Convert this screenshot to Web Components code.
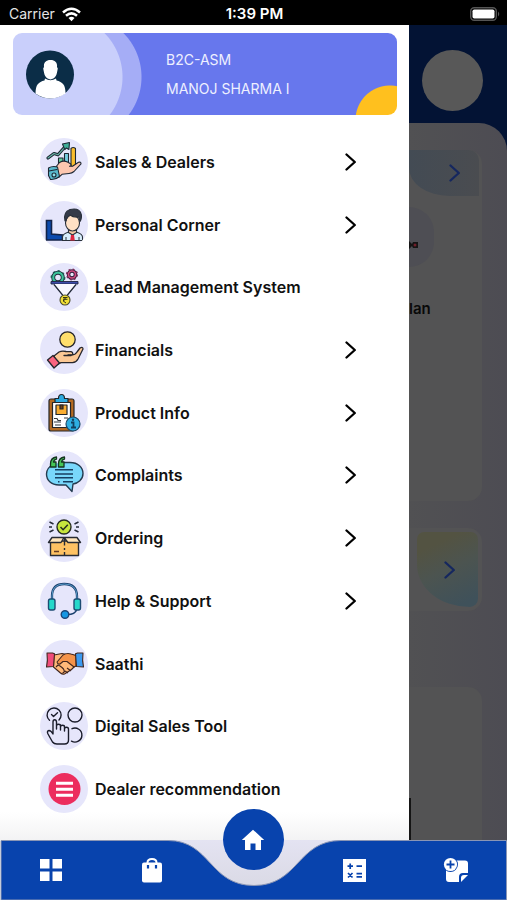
<!DOCTYPE html>
<html lang="en">
<head>
<meta charset="utf-8">
<meta name="viewport" content="width=device-width, initial-scale=1">
<title>Menu</title>
<style>
html, body { margin: 0; }
body { font-family: Inter, "Liberation Sans", sans-serif; background: #fff; color: #111; }
</style>
</head>
<body>
<app-screen>
  <status-bar slot="status"></status-bar>
  <side-drawer slot="drawer">
    <profile-card slot="profile"><span slot="role">B2C-ASM</span><span slot="name">MANOJ SHARMA I</span></profile-card>
    <menu-item icon="sales" more>Sales &amp; Dealers</menu-item>
    <menu-item icon="personal" more>Personal Corner</menu-item>
    <menu-item icon="lead">Lead Management System</menu-item>
    <menu-item icon="finance" more>Financials</menu-item>
    <menu-item icon="product" more>Product Info</menu-item>
    <menu-item icon="complaint" more>Complaints</menu-item>
    <menu-item icon="order" more>Ordering</menu-item>
    <menu-item icon="support" more>Help &amp; Support</menu-item>
    <menu-item icon="saathi">Saathi</menu-item>
    <menu-item icon="digital">Digital Sales Tool</menu-item>
    <menu-item icon="dealer">Dealer recommendation</menu-item>
  </side-drawer>
  <dash-peek slot="page"></dash-peek>
  <tab-bar slot="tabs"></tab-bar>
</app-screen>
<script>
const chevron = `<svg class="chev" width="12" height="18" viewBox="0 0 12 18" fill="none" stroke="currentColor" stroke-width="2.3" stroke-linecap="round" stroke-linejoin="round" aria-hidden="true"><path d="M1.500 1.500L9.800 9 1.500 16.500"/></svg>`;

const icons = {
sales: `<g stroke="#1d2733" stroke-width="1.1" stroke-linejoin="round" stroke-linecap="round">
 <path d="M8 20l6-4.500 4 1.300 7-8" fill="none" stroke-width="3.200"/><path d="M8 20l6-4.500 4 1.300 7-8" fill="none" stroke="#69b4a6" stroke-width="1.100"/>
 <path d="M22.500 6l7-1.500-.6 7-2.500-1.500-1.600 1.600z" fill="#3fae96"/>
 <path d="M18.500 20h4.500v8h-4.500z" fill="#62ce9c"/><path d="M24.500 15.500h4v12h-4z" fill="#76cde0"/><path d="M31 10.500q2.200-2 4.500 0v18H31z" fill="#f9bd2c"/>
 <path d="M15 30l4.500-5.500q4-2.500 8-.5l3 1.800q1.500 2-1 2.500h3l6-4q2.500-.8 2.500 1.500l-7 7.700q-2 1.700-5 2l-7 .8-3.500 3.200z" fill="#fdc7b0"/>
 <path d="M8.500 30q4-2.500 9-1l2 9.500q-4 3.500-9 3l-2-4z" fill="#58b8cc"/><circle cx="14" cy="37" r="2" fill="#8fe0ea"/><path d="M9 33l8-1.500" fill="none"/></g>`,
personal: `<path d="M6.500 19.500h5V33l11 1v5h-16z" fill="#0c4aad" stroke="#132348" stroke-width="1.600"/>
 <g stroke="#29303a" stroke-width="1.100" stroke-linejoin="round">
 <path d="M22.500 39.500V36q0-3 6-5l4-1.500 4 1.500q6 2 6 5v3.500z" fill="#d7edfb"/>
 <path d="M28.500 27h8v4.500l-4 2.500-4-2.500z" fill="#f4c8a4"/><ellipse cx="32.500" cy="22" rx="7" ry="8" fill="#ffe1c5"/>
 <path d="M25 20q-2-9 5-11.500 9-2 11 4 1.500 4-1 8l-1-4.500q-6 .5-9-2-3 1-4 6z" fill="#343a48"/></g>
 <path d="M31 34h3l.8 5.500h-4.600z" fill="#df2740"/><path d="M26 36v3M39 36v3" stroke="#29303a"/>`,
lead: `<g fill="none"><circle cx="18" cy="14.500" r="4.800" stroke="#1f2b3a" stroke-width="4"/><circle cx="18" cy="14.500" r="4.800" stroke="#3cc49a" stroke-width="2.200"/>
 <circle cx="18" cy="14.500" r="6.600" stroke="#1f5a54" stroke-width="1.600" stroke-dasharray="2.200 2.900"/>
 <circle cx="32" cy="11.500" r="3.500" stroke="#30203c" stroke-width="3.500"/><circle cx="32" cy="11.500" r="3.500" stroke="#d24a80" stroke-width="1.700"/>
 <circle cx="32" cy="11.500" r="5.300" stroke="#7c2c58" stroke-width="1.500" stroke-dasharray="2 2.160"/></g>
 <path d="M11 18.500h27v2.500H11z" fill="#3d4cab" stroke="#1f2440" stroke-width=".9"/>
 <path d="M14 21l9 11h4l9-11z" fill="#f8f8ff"/><path d="M14 21.500l9 11v3M36 21.500l-9 11v3" fill="none" stroke="#232a3a" stroke-width="1.300"/>
 <circle cx="25" cy="37" r="5" fill="#f2df35" stroke="#4a4a2b" stroke-width="1.100"/><path d="M23 34.500h4.500M23 36.300h4.500M23 34.500q5 1 0 3.300l3 2.200" fill="none" stroke="#363617"/>`,
finance: `<g stroke="#26262c" stroke-width="1.300" stroke-linejoin="round" stroke-linecap="round">
 <circle cx="27.500" cy="13.500" r="7.700" fill="#ffdf6c"/>
 <path d="M14 30l5-4q3-1.500 7-.5l5 .2q3 1.200 1 3.300h-4 4q3 0 5-3l3-4q3-1.500 3 1l-5 10q-2 3.500-5.500 3.700H21l-4 2z" fill="#fbc895"/>
 <path d="M24 29.500h7" fill="none"/><path d="M7.500 34l5.500-4.500 6.500 7.500-5.500 5z" fill="#fb6480"/></g>`,
product: `<g stroke="#222529" stroke-width="1.200" stroke-linejoin="round">
 <rect x="9" y="10" width="25" height="32" rx="2" fill="#b46a21"/><path d="M12.500 13.500h18v25h-18z" fill="#fff"/>
 <path d="M15 13.500v-4h3.500q0-4 3-4t3 4H28v4z" fill="#2ba9e0"/><path d="M16 16h11v9.500H16z" fill="#f9ad32"/>
 <path d="M20 16h3v4h-3z" fill="#714116"/></g><path d="M14 29.500h3l1 2h3M24 29h4M14 33h7M15 36h6" fill="none" stroke="#37393d" stroke-width="1.100"/>
 <circle cx="33" cy="35" r="7" fill="#2dafe3" stroke="#1d4966" stroke-width="1.200"/><path d="M31 33.500h2.500V38M31 38.500h5" fill="none" stroke="#123f5f" stroke-width="1.800"/><circle cx="33" cy="30.800" r="1.200" fill="#123f5f"/>`,
complaint: `<path d="M20 11.500h10c8 0 13 5 13 11s-5 10-10 10.500l-1 7.500-6-6.500h-7C11 34 6.500 29 6.500 23q0-6 6.500-9.500" fill="#78d7fb" stroke="#243b50" stroke-width="1.400" stroke-linejoin="round"/>
 <path d="M15 18.800h18M15 23h18M15 26.800h18M23 30.800h10M18 30.800h1.500" stroke="#173f62" stroke-width="1.500"/>
 <path d="M16.500 6q-6 .7-6 7v3h5.500v-5H13.500q.5-2.500 3-3zM24.500 6q-6 .7-6 7v3H24v-5h-2.500q.5-2.500 3-3z" fill="#44c557" stroke="#163421" stroke-width="1.300" stroke-linejoin="round"/>`,
order: `<circle cx="24" cy="13" r="7" fill="#c7e63d" stroke="#272d22" stroke-width="1.400"/><path d="M20.500 13l2.600 2.700 4.700-5" fill="none" stroke="#272d22" stroke-width="1.500"/>
 <path d="M9.500 8l4 2M9 13h3M9.500 18l4-2M38.500 8l-4 2M39 13h-3M38.500 18l-4-2" stroke="#252b38" stroke-width="1.500"/>
 <g stroke="#282c34" stroke-width="1.400" stroke-linejoin="round"><path d="M10.500 27h28v14.500h-28z" fill="#fec263"/>
 <path d="M12 23.500h12l-3 5H8.500zM24 23.500h13l3.500 5H28z" fill="#ffe6bb"/><path d="M24.500 23.500v8M24.500 34v2M24.500 38v3.500"/></g><path d="M14 37.500h5" stroke="#663c23" stroke-width="1.600"/>`,
support: `<path d="M12 23v-4q0-12 12.300-12T37 19v4" fill="none" stroke="#1c4270" stroke-width="2.300"/><path d="M12 23v-4q0-12 12.300-12T37 19v4" fill="none" stroke="#73bee9" stroke-width=".7"/>
 <path d="M36.500 33q-1.500 4.500-9 4.500" fill="none" stroke="#1c4270" stroke-width="1.600"/><g fill="#25d8ca" stroke="#1d4c73" stroke-width="1.400"><rect x="8.500" y="22" width="6.500" height="11" rx="2"/><rect x="34" y="22" width="6.500" height="11" rx="2"/></g>
 <circle cx="25" cy="37.500" r="3.800" fill="#1597e4" stroke="#1b4678" stroke-width="1.400"/>`,
saathi: `<g stroke="#40261f" stroke-width="1.100" stroke-linejoin="round"><path d="M14 15l8-1.500 5 1 8.500 1v10l-4 4-7 4.500q-2 .8-4-1l-7-6z" fill="#ffb979"/>
 <path d="M17 22l6-7q4-2.500 8-1l5 1.500v10.500l-2 1-7-5.500h-4l-3 2.500q-2.500.500-3-2z" fill="#f4934a"/>
 <path d="M16 27l2-2 2 1 2 1.500 1.500 1.500 1 2.500-2 2M27 28l4 3M25 31l3 2" fill="none"/>
 <path d="M7 13h5.500l2 .8-1 12.700-7 .5q1.500-6 .5-14z" fill="#f04c7b"/><path d="M43 13h-5.500l-2 .8 1 12.700 7 .5q-1.500-6-.5-14z" fill="#3b9af0"/></g>`,
digital: `<g fill="none" stroke="#1b1d2b" stroke-width="1.400" stroke-linejoin="round" stroke-linecap="round"><path d="M9.500 18.300A7 7 0 1 1 19 18"/><path d="M11.500 12.500l2 2 4-3.800"/><circle cx="35" cy="13" r="7"/><path d="M32 26.700a7 7 0 1 1-.5 12.500"/>
 <path d="M13 32V20q0-2.300 1.700-2.300T16.500 20v7-3q0-1.700 2-1.700t2 1.700v4-3q0-1.700 2-1.700t2 1.700v4-2q0-1.700 2-1.700t2 2V38q0 4-4 4H17q-3 0-4.500-2L8 32q-1.500-3 1-3.500 2 0 4 3.500"/></g>`,
dealer: `<circle cx="24.500" cy="24" r="16" fill="#ec2d5e"/><path d="M16 18.200h17M16 24.200h17M16 30.200h17" stroke="#fff" stroke-width="3"/>`
};

function define(name, render) {
  customElements.define(name, class extends HTMLElement {
    connectedCallback() {
      if (this.shadowRoot) return;
      this.attachShadow({ mode: "open" }).innerHTML = render(this);
    }
  });
}

define("app-screen", () => `<style>
:host { display: grid; grid-template: auto 1fr / minmax(0, 1fr) 98px; min-height: 100vh; position: relative; }
slot[name=status] { grid-column: 1 / -1; display: block; grid-row: 1; }
slot[name=drawer], slot[name=page] { display: grid; min-width: 0; }
slot[name=tabs] { display: block; position: absolute; inset: auto 0 0; }
</style><slot name="status"></slot><slot name="drawer"></slot><slot name="page"></slot><slot name="tabs"></slot>`);

define("status-bar", () => `<style>
:host { display: grid; grid-template-columns: 1fr auto 1fr; align-items: center; height: 25px; box-sizing: border-box; padding: 3px 7px 0 9px; background: #000; color: #fff; line-height: 20px; }
.l { display: flex; gap: 7px; align-items: center; color: #e4e4e4; font-size: 14px; }
b { font-weight: 600; font-size: 15px; }
.r { justify-self: end; }
svg { display: block; }
</style><span class="l">Carrier<svg width="19" height="15" viewBox="0 0 19 15" fill="none" stroke="#fff" stroke-width="2.500"><path d="M1 5.500q8.500-7.500 17 0M4 8.800q5.500-4.800 11 0"/><path d="M6.500 11q3-2.500 6 0l-3 3.200z" fill="#fff" stroke="none"/></svg></span>
<b>1:39 PM</b>
<svg class="r" width="30" height="14" viewBox="0 0 30 14"><rect x=".7" y=".7" width="25.600" height="12.600" rx="3.500" fill="none" stroke="#555" stroke-width="1.400"/><rect x="2.500" y="2.500" width="22" height="9" rx="1.800" fill="#fff"/><path d="M28 4.500q2.500 2.500 0 5z" fill="#555"/></svg>`);

define("side-drawer", () => `<style>
:host { display: flex; flex-direction: column; background: #fff; padding: 8px 12px 87px 13px; position: relative; }
:host::after { content: ""; position: absolute; inset: auto 0 60px; height: 28px; background: linear-gradient(#fff0, #e9e9ea88); pointer-events: none; }
nav { flex: 1; display: flex; flex-direction: column; justify-content: space-between; padding: 23px 40px 0 27px; }
</style><slot name="profile"></slot><nav aria-label="Main menu"><slot></slot></nav>`);

define("profile-card", () => `<style>
:host { display: flex; align-items: center; gap: 91px; height: 82px; padding: 0 13px; box-sizing: border-box; border-radius: 9px; color: #eef0ff; font-size: 14px; line-height: 20px;
 background: radial-gradient(circle at calc(100% - 7px) 87px, #ffc01e 34px, #0000 35px), radial-gradient(circle at 47px 44px, #c9cffb 62px, #0000 63px), radial-gradient(circle at 66px 44px, #a5adf6 62px, #6777ed 63px); }
.t { display: flex; flex-direction: column; gap: 9px; }
</style><svg width="49" height="49" viewBox="0 0 49 49" role="img" aria-label="Profile picture"><circle cx="24" cy="24.500" r="24" fill="#0b2d47"/><path d="M24.500 10c-5 0-7 3-6.500 7l-.8 1.500.8 4c.5 3 2 6 6.500 7 4.500-1 6-4 6.500-7l.8-4-.8-1.500c.5-4-1.500-7-6.500-7zM19 28.500l-.5 2c-6 1.500-9 4-9 13q15 10 30 0c0-9-3-11.500-9-13l-.5-2q-5.500 3.500-11 0z" fill="#fff"/></svg>
<div class="t"><slot name="role"></slot><slot name="name"></slot></div>`);

define("menu-item", el => `<style>
:host { display: block; }
button { all: unset; box-sizing: border-box; display: flex; align-items: center; gap: 7px; width: 100%; cursor: pointer; font-size: 16px; line-height: 20px; font-weight: 600; color: #111; }
button:focus-visible { outline: 2px solid #0843ad; }
.i { display: block; background: #e6e6fb; border-radius: 50%; flex: none; }
.t { flex: 1; } .chev { color: #000; }
</style><button type="button"><svg class="i" width="48" height="48" viewBox="0 0 48 48" aria-hidden="true">${icons[el.getAttribute("icon")]}</svg><span class="t"><slot></slot></span>${el.hasAttribute("more") ? chevron : ""}</button>`);

define("dash-peek", () => `<style>
:host { display: flex; flex-direction: column; background: #031334; overflow: hidden; color: #15275f; }
.av { width: 61px; height: 61px; border-radius: 50%; background: #585858; margin: 25px 0 12px 13px; }
.sheet { flex: 1; background: linear-gradient(90deg, #515153, #4d4c53); border-top-right-radius: 28px; padding: 27px 25px 0 0; display: flex; flex-direction: column; }
.card { background: #535354; border-radius: 0 14px 14px 0; box-sizing: border-box; }
.one { height: 351px; padding-right: 3px; }
.head { height: 46px; background: linear-gradient(90deg, #434b54, #4a4c50); border-radius: 0 10px 0 40px / 0 10px 0 28px; display: flex; align-items: center; justify-content: flex-end; padding-right: 18px; }
.orb { width: 25px; height: 60px; margin-top: 11px; border-radius: 0 30px 30px 0; background: #4e4e54; display: flex; align-items: center; }
.orb svg { margin-top: 16px; }
.lan { color: #090909; font-weight: 600; font-size: 15px; line-height: 20px; margin-top: 32px; display: block; }
.two { height: 83px; margin-top: 27px; padding: 4px 4px 4px 8px; }
.blob { height: 75px; border-radius: 12px 12px 14px 90px / 12px 12px 14px 72px; background: linear-gradient(155deg, #535342 20%, #4c5450 50%, #3f515a 90%); display: flex; align-items: center; justify-content: flex-end; padding-right: 22px; }
.three { flex: 1; margin-top: 76px; }
.edge { position: absolute; bottom: 60px; width: 2px; height: 42px; background: #151515; }
</style><div class="av"></div><div class="sheet">
<div class="card one"><div class="head">${chevron}</div><div class="orb"><svg width="10" height="12" viewBox="0 0 10 12"><path d="M0 2l3 3 1-2h5v6H4L3 7 0 10z" fill="#151515"/><circle cx="6" cy="6" r="1.500" fill="#701e2a"/></svg></div><span class="lan">lan</span></div>
<div class="card two"><div class="blob">${chevron}</div></div><div class="card three"></div></div><div class="edge"></div>`);

define("tab-bar", () => `<style>
:host { display: block; position: relative; height: 60px; }
.bg { position: absolute; inset: 0; width: 100%; height: 100%; }
nav { position: relative; display: grid; grid-template-columns: repeat(5, 1fr); height: 60px; align-items: center; justify-items: center; }
a { display: grid; place-items: center; color: #fff; width: 48px; height: 48px; }
a svg { display: block; }
.home { width: 61px; height: 61px; border-radius: 50%; background: #0843ad; align-self: start; margin-top: -31px; }
</style><svg class="bg" viewBox="0 0 507 60" preserveAspectRatio="none" aria-hidden="true"><defs><linearGradient id="n" x2="0" y2="1"><stop stop-color="#e4e3f2"/><stop offset="1" stop-color="#d9d9e4"/></linearGradient></defs><path d="M165 0h179v50H165z" fill="url(#n)"/><path d="M1 .5H168C211 .5 209 45.500 254 45.500S297 .5 341 .5H506.500V60H1z" fill="#0843ad" stroke="#8a96b5"/></svg>
<nav aria-label="Tabs">
<a href="#dashboard" aria-label="Dashboard"><svg width="24" height="24" viewBox="0 0 24 24" fill="currentColor"><path d="M1 1h9.500v9.500H1zM13.500 1H23v9.500h-9.500zM1 13.500h9.500V23H1zM13.500 13.500H23V23h-9.500z"/></svg></a>
<a href="#bag" aria-label="Orders"><svg width="22" height="26" viewBox="0 0 22 26"><path d="M6.500 8V5.500Q6.500 2 11 2t4.500 3.500V8" fill="none" stroke="#fff" stroke-width="2"/><rect x="1" y="5.500" width="20" height="20" rx="2" fill="#fff"/><path d="M7 8v3.500M15 8v3.500" stroke="#0843ad" stroke-width="2.200"/></svg></a>
<a class="home" href="#home" aria-label="Home"><svg width="24" height="22" viewBox="0 0 24 22" fill="currentColor"><path d="M12 .7L.8 11H4v10h5.500v-6.500h5V21H20V11h3.200z"/></svg></a>
<a href="#calculator" aria-label="Calculator"><svg width="23" height="23" viewBox="0 0 23 23"><path d="M0 0h23v23H0z" fill="#fff"/><path d="M4.500 7.200h5.500M7.200 4.500V10M13.500 7.200H19M5 14l4.500 4.500M9.500 14L5 18.500M13.500 14.700H19M13.500 17.800H19" stroke="#0843ad" stroke-width="1.700"/></svg></a>
<a href="#notes" aria-label="Add note"><svg width="26" height="27" viewBox="0 0 26 27"><path d="M12 3.500h10q3 0 3 3V16h-5q-4 0-4 4v5H6q-3 0-3-3V10z" fill="#fff"/><path d="M18 25v-4q0-3 3-3h4z" fill="#fff"/><circle cx="7.500" cy="7.500" r="7.500" fill="#0843ad"/><circle cx="7.500" cy="7.500" r="6.600" fill="#fff"/><path d="M3.500 7.500h8M7.500 3.500v8" stroke="#0843ad" stroke-width="1.800"/></svg></a>
</nav>`);
</script>
</body>
</html>
